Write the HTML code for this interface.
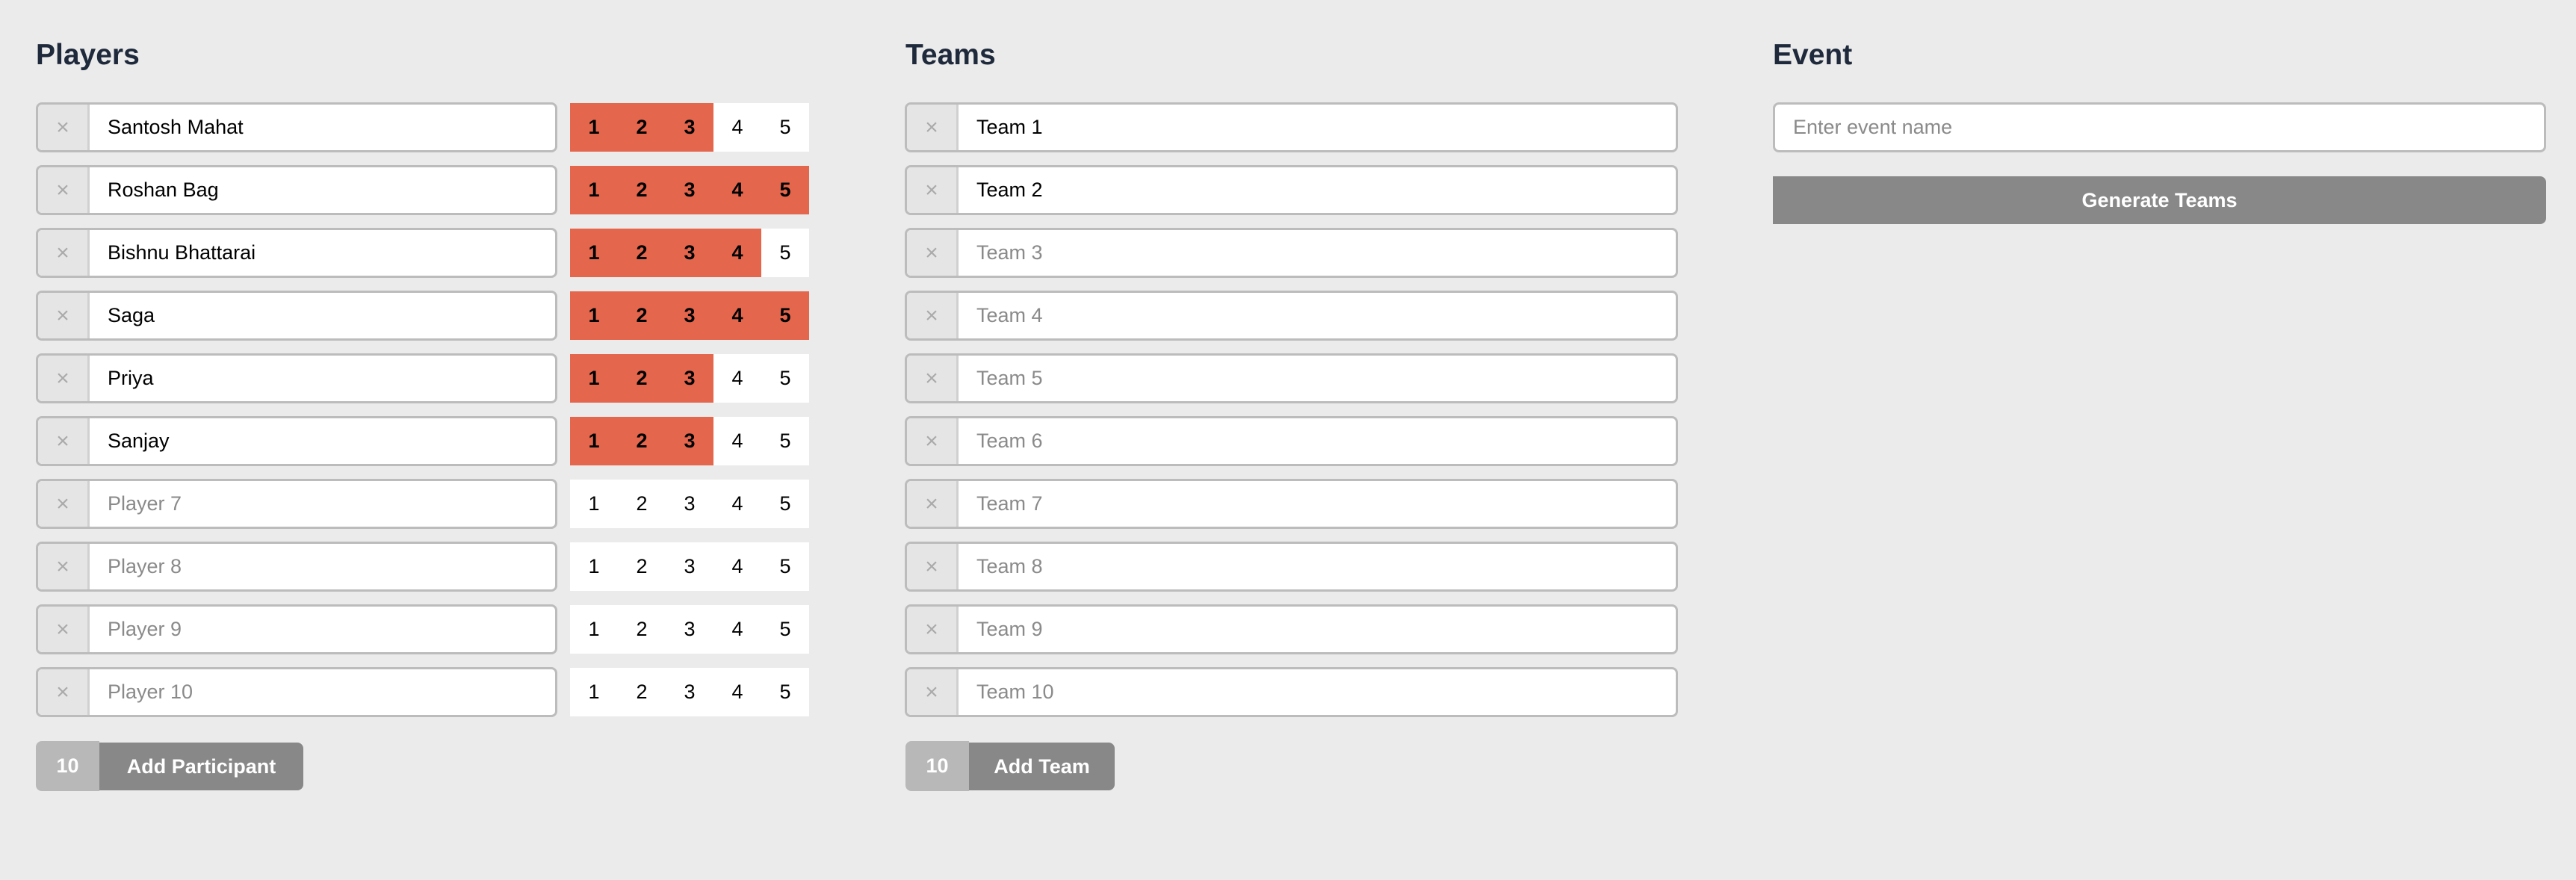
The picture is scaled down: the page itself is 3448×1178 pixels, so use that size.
<!DOCTYPE html>
<html><head><meta charset="utf-8"><style>
*{box-sizing:border-box;margin:0;padding:0}
body{width:3448px;height:1178px;background:#ebebeb;font-family:"Liberation Sans",sans-serif;position:relative;overflow:hidden}
h2{position:absolute;top:52px;font-size:39px;font-weight:bold;color:#1e293b}
.row{position:absolute;height:67px;border:3px solid #bcbcbc;border-radius:8px;background:#fff;overflow:hidden;display:flex}
.x{width:69px;background:#e5e5e5;border-right:3px solid #d0d0d0;color:#aaa;font-size:30px;display:flex;align-items:center;justify-content:center}
.t{display:flex;align-items:center;padding-left:24px;font-size:27px;color:#000}
.t.p{color:#8a8a8a}
.rt{position:absolute;left:763px;width:320px;height:65px;display:flex;background:#fff}
.rt div{width:64px;display:flex;align-items:center;justify-content:center;font-size:27px;color:#000}
.rt div.on{background:#e4664d;font-weight:bold}
.cnt{position:absolute;top:992px;height:67px;width:85px;background:#b8b8b8;border-radius:8px 0 0 8px;color:#fff;font-weight:bold;font-size:27px;display:flex;align-items:center;justify-content:center}
.btn{position:absolute;top:994px;height:64px;background:#888;border-radius:0 8px 8px 0;color:#fff;font-weight:bold;font-size:27px;display:flex;align-items:center;justify-content:center}
</style></head><body>
<h2 style="left:48px">Players</h2>
<h2 style="left:1212px">Teams</h2>
<h2 style="left:2373px">Event</h2>

<div class="row" style="left:48px;top:137px;width:698px"><div class="x">×</div><div class="t">Santosh Mahat</div></div>
<div class="row" style="left:48px;top:221px;width:698px"><div class="x">×</div><div class="t">Roshan Bag</div></div>
<div class="row" style="left:48px;top:305px;width:698px"><div class="x">×</div><div class="t">Bishnu Bhattarai</div></div>
<div class="row" style="left:48px;top:389px;width:698px"><div class="x">×</div><div class="t">Saga</div></div>
<div class="row" style="left:48px;top:473px;width:698px"><div class="x">×</div><div class="t">Priya</div></div>
<div class="row" style="left:48px;top:557px;width:698px"><div class="x">×</div><div class="t">Sanjay</div></div>
<div class="row" style="left:48px;top:641px;width:698px"><div class="x">×</div><div class="t p">Player 7</div></div>
<div class="row" style="left:48px;top:725px;width:698px"><div class="x">×</div><div class="t p">Player 8</div></div>
<div class="row" style="left:48px;top:809px;width:698px"><div class="x">×</div><div class="t p">Player 9</div></div>
<div class="row" style="left:48px;top:893px;width:698px"><div class="x">×</div><div class="t p">Player 10</div></div>

<div class="rt" style="top:138px"><div class="on">1</div><div class="on">2</div><div class="on">3</div><div>4</div><div>5</div></div>
<div class="rt" style="top:222px"><div class="on">1</div><div class="on">2</div><div class="on">3</div><div class="on">4</div><div class="on">5</div></div>
<div class="rt" style="top:306px"><div class="on">1</div><div class="on">2</div><div class="on">3</div><div class="on">4</div><div>5</div></div>
<div class="rt" style="top:390px"><div class="on">1</div><div class="on">2</div><div class="on">3</div><div class="on">4</div><div class="on">5</div></div>
<div class="rt" style="top:474px"><div class="on">1</div><div class="on">2</div><div class="on">3</div><div>4</div><div>5</div></div>
<div class="rt" style="top:558px"><div class="on">1</div><div class="on">2</div><div class="on">3</div><div>4</div><div>5</div></div>
<div class="rt" style="top:642px"><div>1</div><div>2</div><div>3</div><div>4</div><div>5</div></div>
<div class="rt" style="top:726px"><div>1</div><div>2</div><div>3</div><div>4</div><div>5</div></div>
<div class="rt" style="top:810px"><div>1</div><div>2</div><div>3</div><div>4</div><div>5</div></div>
<div class="rt" style="top:894px"><div>1</div><div>2</div><div>3</div><div>4</div><div>5</div></div>

<div class="row" style="left:1211px;top:137px;width:1035px"><div class="x">×</div><div class="t">Team 1</div></div>
<div class="row" style="left:1211px;top:221px;width:1035px"><div class="x">×</div><div class="t">Team 2</div></div>
<div class="row" style="left:1211px;top:305px;width:1035px"><div class="x">×</div><div class="t p">Team 3</div></div>
<div class="row" style="left:1211px;top:389px;width:1035px"><div class="x">×</div><div class="t p">Team 4</div></div>
<div class="row" style="left:1211px;top:473px;width:1035px"><div class="x">×</div><div class="t p">Team 5</div></div>
<div class="row" style="left:1211px;top:557px;width:1035px"><div class="x">×</div><div class="t p">Team 6</div></div>
<div class="row" style="left:1211px;top:641px;width:1035px"><div class="x">×</div><div class="t p">Team 7</div></div>
<div class="row" style="left:1211px;top:725px;width:1035px"><div class="x">×</div><div class="t p">Team 8</div></div>
<div class="row" style="left:1211px;top:809px;width:1035px"><div class="x">×</div><div class="t p">Team 9</div></div>
<div class="row" style="left:1211px;top:893px;width:1035px"><div class="x">×</div><div class="t p">Team 10</div></div>

<div class="row" style="left:2373px;top:137px;width:1035px"><div class="t p" style="padding-left:24px">Enter event name</div></div>
<div style="position:absolute;left:2373px;top:236px;width:1035px;height:64px;background:#888;border-radius:0 8px 8px 0;color:#fff;font-weight:bold;font-size:27px;display:flex;align-items:center;justify-content:center">Generate Teams</div>

<div class="cnt" style="left:48px">10</div>
<div class="btn" style="left:133px;width:273px">Add Participant</div>
<div class="cnt" style="left:1212px">10</div>
<div class="btn" style="left:1297px;width:195px">Add Team</div>
</body></html>
